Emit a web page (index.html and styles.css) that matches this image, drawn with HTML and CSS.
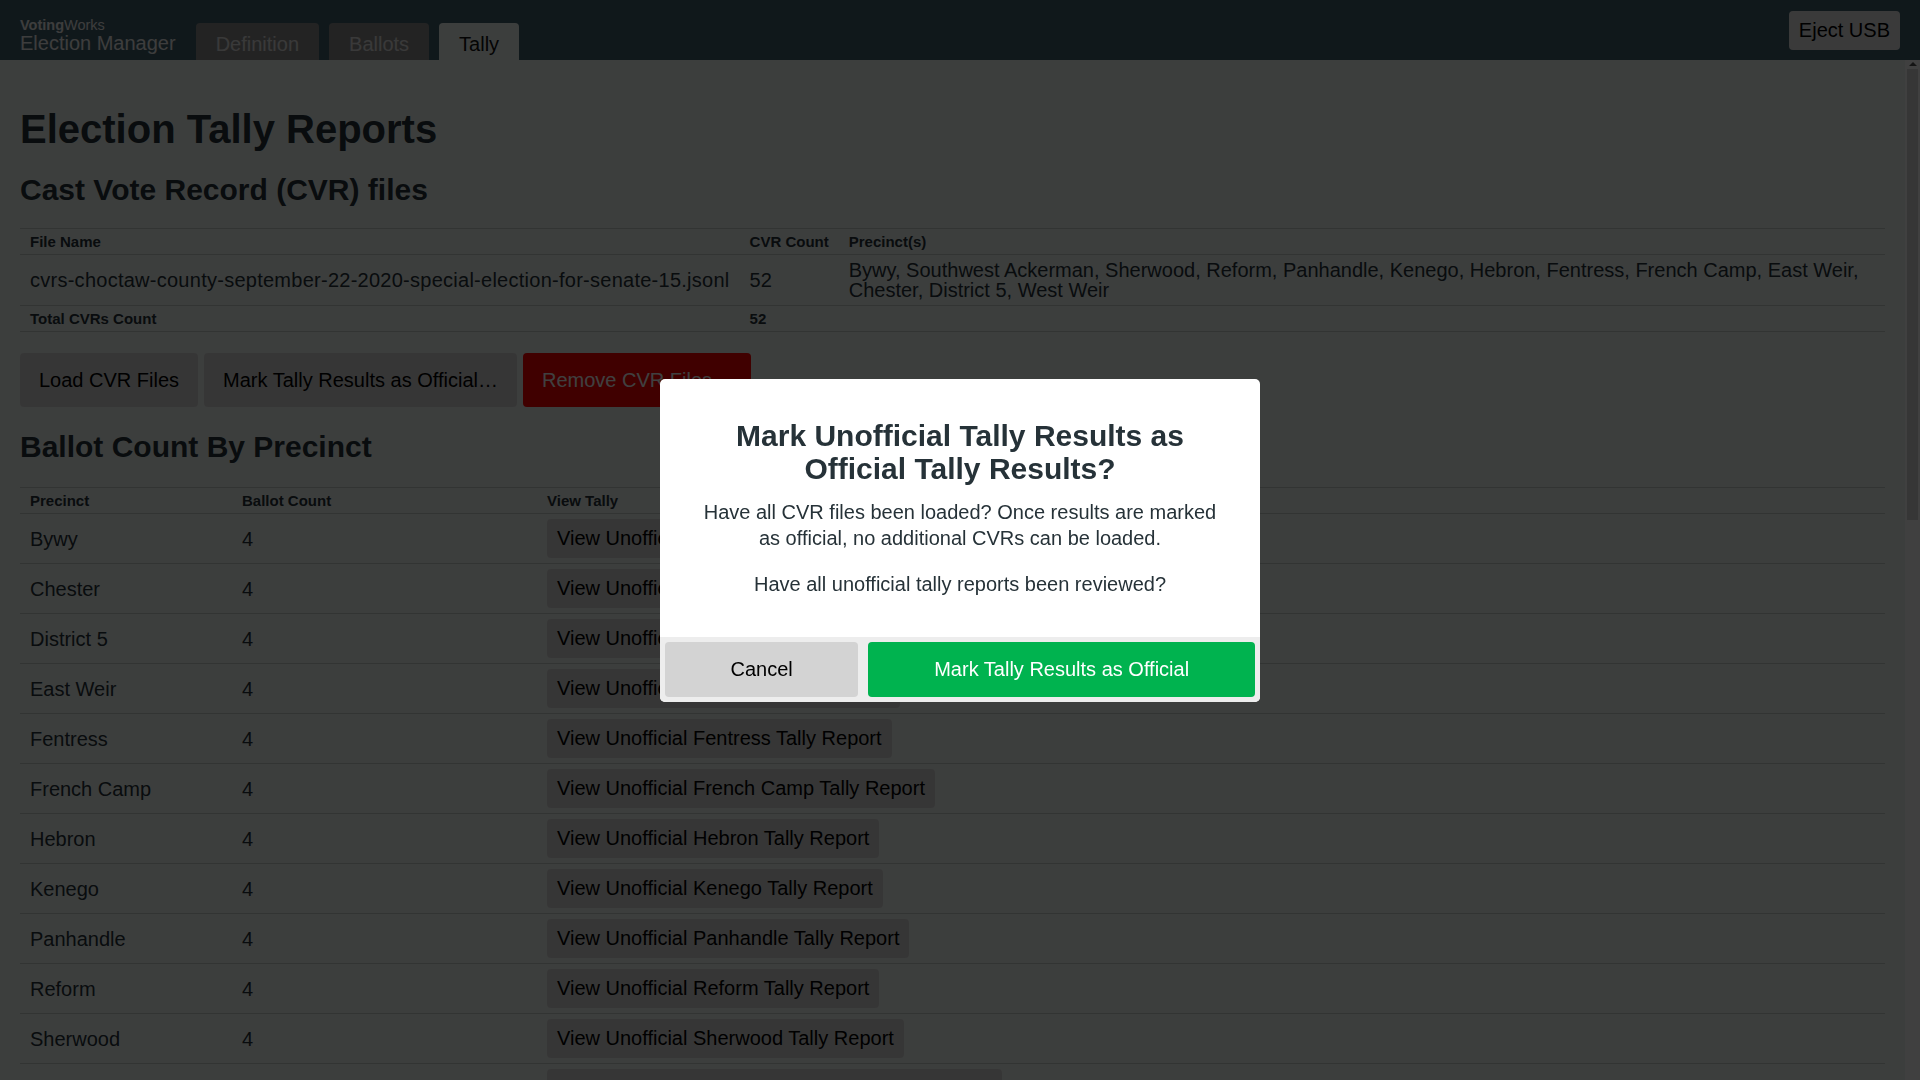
FILE: index.html
```html
<!DOCTYPE html>
<html lang="en">
<head>
<meta charset="utf-8">
<title>Election Manager - Tally</title>
<link rel="stylesheet" href="styles.css">
</head>
<body>
<div class="app">
  <header class="topbar">
    <div class="brand">
      <div class="brand-org"><b>Voting</b>Works</div>
      <div class="brand-app">Election Manager</div>
    </div>
    <nav class="tabs">
      <a class="tab" href="#">Definition</a>
      <a class="tab" href="#">Ballots</a>
      <a class="tab tab-active" href="#">Tally</a>
    </nav>
    <button class="btn btn-eject">Eject USB</button>
  </header>

  <div class="workspace">
    <main class="main">
      <h1 class="page-title">Election Tally Reports</h1>

      <h2 class="section-title section-first">Cast Vote Record (CVR) files</h2>
      <table class="data-table cvr-table">
        <thead>
          <tr><th class="nowrap">File Name</th><th class="nowrap">CVR Count</th><th>Precinct(s)</th></tr>
        </thead>
        <tbody>
          <tr>
            <td class="nowrap file-name">cvrs-choctaw-county-september-22-2020-special-election-for-senate-15.jsonl</td>
            <td class="nowrap">52</td>
            <td>Bywy, Southwest Ackerman, Sherwood, Reform, Panhandle, Kenego, Hebron, Fentress, French Camp, East Weir, Chester, District 5, West Weir</td>
          </tr>
          <tr class="total-row">
            <th>Total CVRs Count</th><th>52</th><th></th>
          </tr>
        </tbody>
      </table>

      <div class="actions">
        <button class="btn btn-lg">Load CVR Files</button>
        <button class="btn btn-lg">Mark Tally Results as Official…</button>
        <button class="btn btn-lg btn-danger">Remove CVR Files…</button>
      </div>

      <h2 class="section-title">Ballot Count By Precinct</h2>
      <table class="data-table precinct-table">
        <colgroup><col class="col-a"><col class="col-b"><col></colgroup>
        <thead>
          <tr><th>Precinct</th><th>Ballot Count</th><th>View Tally</th></tr>
        </thead>
        <tbody>
          <tr><td>Bywy</td><td>4</td><td><button class="btn btn-sm">View Unofficial Bywy Tally Report</button></td></tr>
          <tr><td>Chester</td><td>4</td><td><button class="btn btn-sm">View Unofficial Chester Tally Report</button></td></tr>
          <tr><td>District 5</td><td>4</td><td><button class="btn btn-sm">View Unofficial District 5 Tally Report</button></td></tr>
          <tr><td>East Weir</td><td>4</td><td><button class="btn btn-sm">View Unofficial East Weir Tally Report</button></td></tr>
          <tr><td>Fentress</td><td>4</td><td><button class="btn btn-sm">View Unofficial Fentress Tally Report</button></td></tr>
          <tr><td>French Camp</td><td>4</td><td><button class="btn btn-sm">View Unofficial French Camp Tally Report</button></td></tr>
          <tr><td>Hebron</td><td>4</td><td><button class="btn btn-sm">View Unofficial Hebron Tally Report</button></td></tr>
          <tr><td>Kenego</td><td>4</td><td><button class="btn btn-sm">View Unofficial Kenego Tally Report</button></td></tr>
          <tr><td>Panhandle</td><td>4</td><td><button class="btn btn-sm">View Unofficial Panhandle Tally Report</button></td></tr>
          <tr><td>Reform</td><td>4</td><td><button class="btn btn-sm">View Unofficial Reform Tally Report</button></td></tr>
          <tr><td>Sherwood</td><td>4</td><td><button class="btn btn-sm">View Unofficial Sherwood Tally Report</button></td></tr>
          <tr><td>Southwest Ackerman</td><td>4</td><td><button class="btn btn-sm">View Unofficial Southwest Ackerman Tally Report</button></td></tr>
          <tr><td>West Weir</td><td>4</td><td><button class="btn btn-sm">View Unofficial West Weir Tally Report</button></td></tr>
          <tr class="total-row"><th>Total Ballot Count</th><th>52</th><th><button class="btn btn-sm">View Unofficial Full Election Tally Report</button></th></tr>
        </tbody>
      </table>

      <h2 class="section-title">Ballot Count By Scanner</h2>
      <table class="data-table precinct-table">
        <colgroup><col class="col-a"><col class="col-b"><col></colgroup>
        <thead>
          <tr><th>Scanner ID</th><th>Ballot Count</th><th>View Tally</th></tr>
        </thead>
        <tbody>
          <tr><td>scanner-1</td><td>52</td><td><button class="btn btn-sm">View Unofficial Tally Report for Scanner scanner-1</button></td></tr>
          <tr class="total-row"><th>Total Ballot Count</th><th>52</th><th></th></tr>
        </tbody>
      </table>
    </main>

    <div class="scrollbar" aria-hidden="true">
      <div class="scroll-arrow"></div>
      <div class="scroll-thumb"></div>
    </div>
  </div>
</div>

<div class="backdrop">
  <div class="modal" role="dialog" aria-modal="true">
    <div class="modal-body">
      <h1 class="modal-title">Mark Unofficial Tally Results as Official Tally Results?</h1>
      <p>Have all CVR files been loaded? Once results are marked as official, no additional CVRs can be loaded.</p>
      <p>Have all unofficial tally reports been reviewed?</p>
    </div>
    <div class="modal-footer">
      <button class="btn btn-modal btn-cancel">Cancel</button>
      <button class="btn btn-modal btn-primary">Mark Tally Results as Official</button>
    </div>
  </div>
</div>
</body>
</html>
```

FILE: styles.css
```css
html,
body {
  margin: 0;
  height: 100%;
}

body {
  font-family: "Liberation Sans", Arial, Helvetica, sans-serif;
  font-size: 20px;
  color: #263238;
  background: #f0f6f4;
}

.app {
  height: 100vh;
  display: flex;
  flex-direction: column;
}

/* ---------- top bar ---------- */
.topbar {
  flex: none;
  height: 60px;
  box-sizing: border-box;
  padding: 0 20px;
  display: flex;
  align-items: flex-end;
  background: #40606c;
}

.brand {
  color: #f2f2f2;
  padding-bottom: 7px;
  margin-right: 20px;
}

.brand-org {
  font-size: 14.5px;
  line-height: 15px;
}

.brand-app {
  font-size: 20px;
  line-height: 20px;
}

.tabs {
  display: flex;
  gap: 10px;
}

.tab {
  display: block;
  padding: 9px 20px 4px;
  line-height: 24px;
  border-radius: 4px 4px 0 0;
  background: #8c8c8c;
  color: #e4e4e4;
  text-decoration: none;
}

.tab-active {
  background: #f0f6f4;
  color: #111111;
}

/* ---------- buttons ---------- */
.btn {
  font-family: inherit;
  font-size: 20px;
  border: none;
  border-radius: 4px;
  background: #d8d8d8;
  color: #000000;
  cursor: pointer;
  white-space: nowrap;
}

.btn-eject {
  margin-left: auto;
  align-self: center;
  padding: 7px 10px;
  line-height: 25px;
  background: #e8e8e8;
}

.btn-lg {
  padding: 15px 19px;
  line-height: 24px;
}

.btn-sm {
  padding: 7px 10px;
  line-height: 25px;
}

.btn-danger {
  background: #ff0000;
  color: #ffffff;
}

/* ---------- workspace ---------- */
.workspace {
  flex: 1;
  min-height: 0;
  display: flex;
}

.main {
  flex: 1;
  min-width: 0;
  overflow: hidden;
  padding: 0 20px;
}

.scrollbar {
  flex: none;
  width: 15px;
  display: flex;
  flex-direction: column;
  align-items: center;
  background: #ffffff;
}

.scroll-arrow {
  width: 0;
  height: 0;
  margin-top: 2px;
  border-left: 4px solid transparent;
  border-right: 4px solid transparent;
  border-bottom: 4px solid #505050;
}

.scroll-thumb {
  width: 11px;
  height: 451px;
  margin-top: 3px;
  background: #d6d6d6;
}

.page-title {
  font-size: 40px;
  line-height: 48px;
  margin: 45px 0 0;
}

.section-title {
  font-size: 30px;
  line-height: 36px;
  margin: 22px 0 22px;
}

.section-first {
  margin: 19px 0 20px;
}

.data-table {
  width: 100%;
  border-collapse: collapse;
  margin-bottom: 21px;
}

.data-table th,
.data-table td {
  padding: 5px 10px;
  text-align: left;
  vertical-align: middle;
  border-top: 1px solid #c8d0cc;
  border-bottom: 1px solid #c8d0cc;
}

.data-table th {
  font-size: 15px;
  line-height: 15px;
  font-weight: bold;
}

.data-table td {
  line-height: 20px;
}

.nowrap {
  white-space: nowrap;
}

.file-name {
  letter-spacing: 0.26px;
}

.precinct-table {
  table-layout: fixed;
}

.col-a {
  width: 212px;
}

.col-b {
  width: 305px;
}

.actions {
  display: flex;
  gap: 6px;
}

/* ---------- modal ---------- */
.backdrop {
  position: fixed;
  inset: 0;
  background: rgba(0, 0, 0, 0.75);
  display: flex;
  align-items: center;
  justify-content: center;
}

.modal {
  width: 600px;
  background: #ffffff;
  border-radius: 5px;
  overflow: hidden;
}

.modal-body {
  padding: 40px;
  text-align: center;
}

.modal-title {
  font-size: 30px;
  line-height: 33px;
  margin: 0 0 14px;
}

.modal-body p {
  margin: 0 0 20px;
  line-height: 26px;
}

.modal-body p:last-child {
  margin-bottom: 0;
}

.modal-footer {
  display: grid;
  grid-template-columns: 1fr 2fr;
  gap: 10px;
  padding: 5px;
  background: #ededed;
}

.btn-modal {
  padding: 15px 20px;
  line-height: 25px;
}

.btn-cancel {
  background: #d3d3d3;
}

.btn-primary {
  background: #00b34f;
  color: #ffffff;
}
```
